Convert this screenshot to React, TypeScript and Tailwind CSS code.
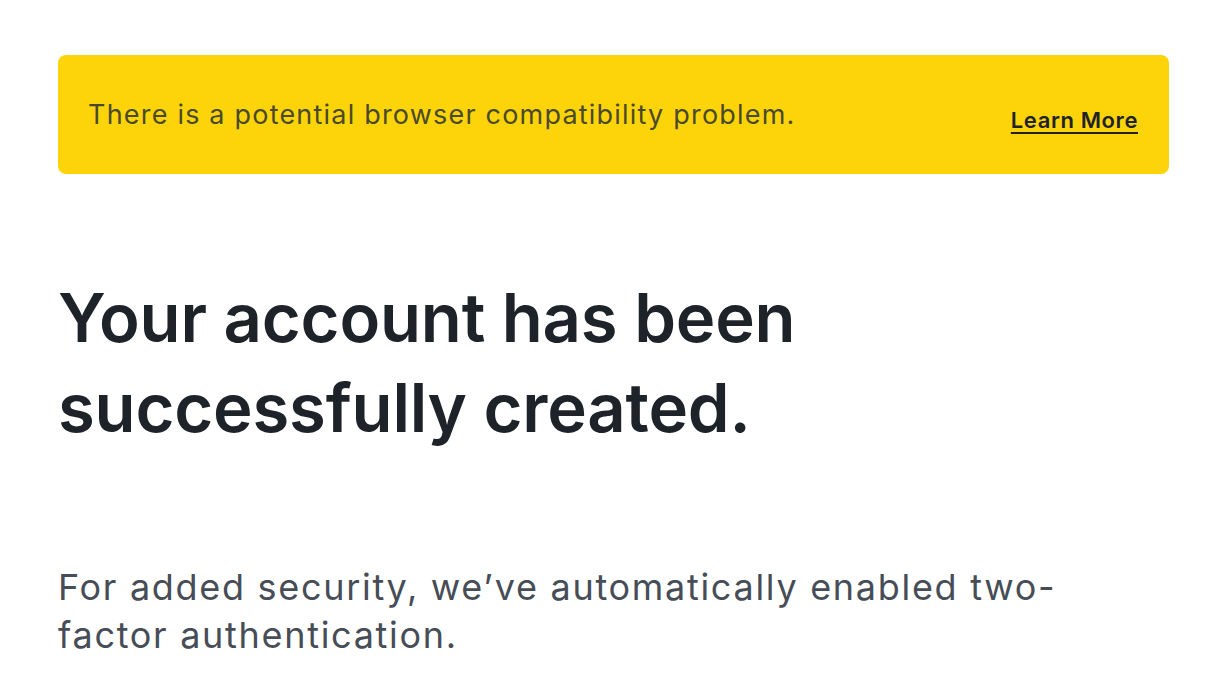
export default function App() {
  return (
    <div
      className="min-h-screen bg-white px-[58px] pt-[55px]"
      style={{ fontFamily: "Inter, 'Noto Sans', sans-serif" }}
    >
      {/* BANNER */}
      <div className="w-[1111px] h-[119px] rounded-lg bg-[#FDD40A] flex items-start justify-between pl-[30px] pr-[31px] pt-[44px]">
        <p className="text-[27px] leading-[32px] tracking-[1.2px] text-[#4a4a2a]">
          There is a potential browser compatibility problem.
        </p>
        <a
          href="#"
          className="mt-[7px] text-[22px] leading-[28px] tracking-[0.6px] font-semibold text-[#1E2329] underline underline-offset-4 decoration-2"
        >
          Learn More
        </a>
      </div>

      {/* TITLE */}
      <h1 className="mt-[99px] text-[67px] leading-[90px] tracking-[-0.2px] font-semibold text-[#1E2329]">
        Your account has been
        <br />
        successfully created.
      </h1>

      {/* BODY */}
      <p className="mt-[110px] text-[36px] leading-[48px] tracking-[1.7px] text-[#474D57]">
        For added security, we’ve automatically enabled two-
        <br />
        factor authentication.
      </p>
    </div>
  );
}
